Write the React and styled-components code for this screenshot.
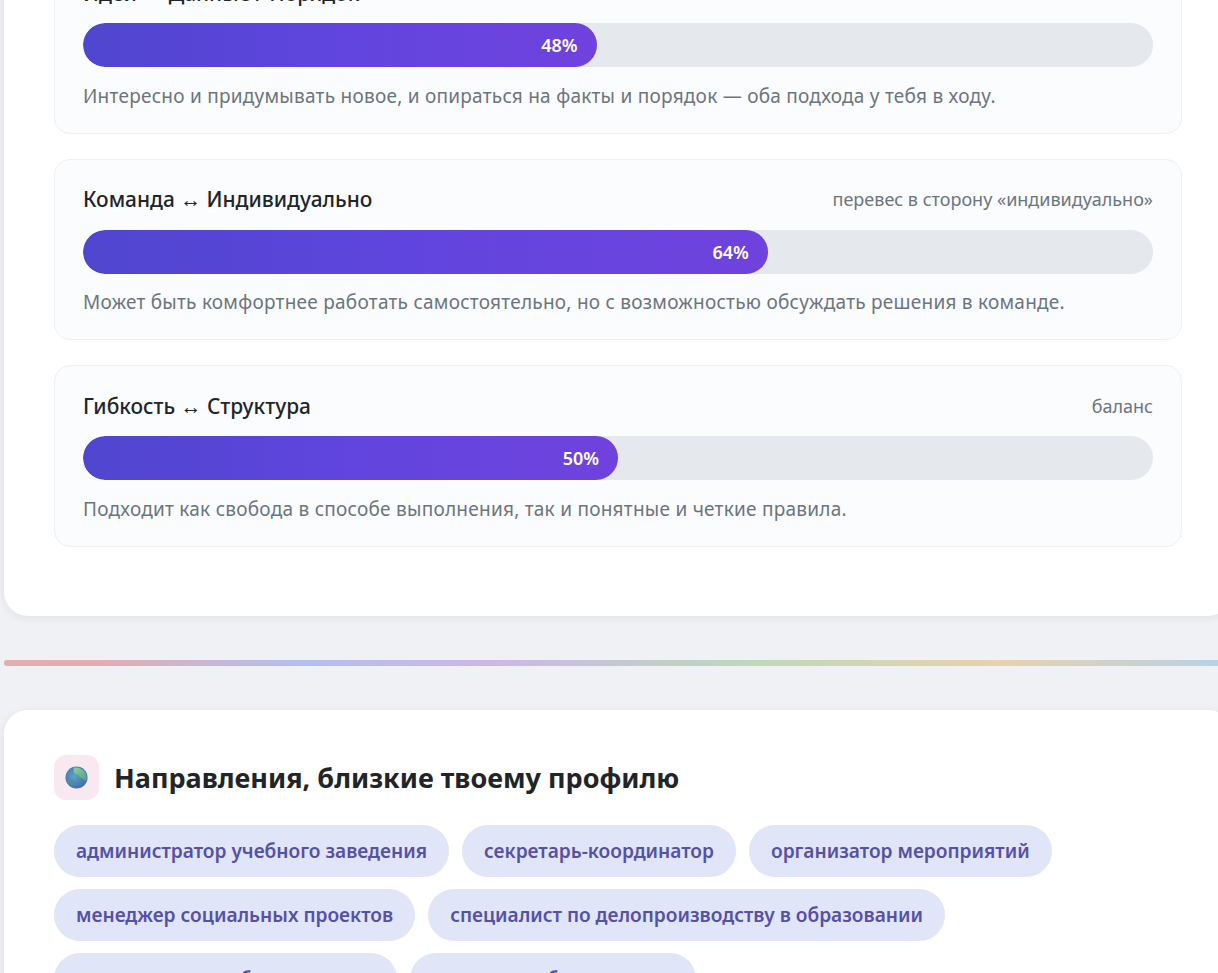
import React from "react";
import styled, { createGlobalStyle } from "styled-components";

const Global = createGlobalStyle`
  html, body { margin: 0; padding: 0; height: 973px; overflow: hidden; background: #f0f1f4; }
  * { box-sizing: border-box; }
  body { font-family: "Noto Sans", "Open Sans", "Liberation Sans", sans-serif; }
`;

const Page = styled.main`
  width: 1228px;
  margin: -97.75px 0 0 4px;
`;
const Card = styled.section`
  background: #fff;
  border-radius: 24px;
  box-shadow: 0 2px 10px rgba(30, 40, 60, 0.07);
  padding: 50px;
`;
const MetricList = styled.div`
  display: flex;
  flex-direction: column;
  gap: 25px;
  padding-bottom: 19.5px;
`;
const Metric = styled.article`
  background: #fbfcfe;
  border: 1px solid #eef0f3;
  border-radius: 16px;
  padding: 23px 28px 0;
  height: 181.5px;
`;
const MetricHead = styled.header`
  display: flex;
  justify-content: space-between;
  align-items: center;
  height: 33px;
  margin-bottom: 14px;
`;
const MetricTitle = styled.h3`
  margin: 0;
  font-size: 20.9px;
  font-weight: 500;
  color: #212529;
`;
const Lean = styled.span`
  font-size: 18px;
  color: #6c757d;
`;
const Track = styled.div`
  height: 44px;
  border-radius: 22px;
  background: #e5e8ec;
  overflow: hidden;
`;
const Fill = styled.div`
  height: 100%;
  border-radius: 22px;
  background: linear-gradient(90deg, #4f46cf 0%, #5f45dd 45%, #7042de 100%);
  color: #fff;
  font-size: 18px;
  font-weight: 600;
  display: flex;
  align-items: center;
  justify-content: flex-end;
  padding-right: 19px;
`;
const Note = styled.p`
  margin: 15.5px 0 0;
  font-size: 19px;
  letter-spacing: 0.25px;
  line-height: 27px;
  color: #6c757d;
  white-space: nowrap;
`;
const Rainbow = styled.div`
  height: 6px;
  margin: 44px 0;
  border-radius: 3px;
  background: linear-gradient(90deg, #e2aeae 0%, #e0aeb0 8%, #b4bff0 24%, #cdb7e8 40%, #bcd9bc 60%, #e8d2ac 81%, #b4d2e8 100%);
`;
const SectionHead = styled.header`
  display: flex;
  align-items: center;
  gap: 15px;
  margin: -5px 0 25px;
`;
const IconBox = styled.div`
  width: 45px;
  height: 45px;
  border-radius: 12px;
  background: #fae8f0;
  display: flex;
  align-items: center;
  justify-content: center;
`;
const SectionTitle = styled.h2`
  margin: 0;
  font-size: 27px;
  font-weight: 700;
  color: #212529;
`;
const Pills = styled.div`
  display: flex;
  flex-wrap: wrap;
  gap: 12px 13px;
  width: 1000px;
`;
const Pill = styled.span`
  height: 52px;
  border-radius: 26px;
  background: #e0e5f8;
  color: #5650a6;
  font-size: 19.1px;
  font-weight: 600;
  padding: 0 22px;
  display: flex;
  align-items: center;
  white-space: nowrap;
`;

const Globe = () => (
  <svg width="23" height="23" viewBox="0 0 24 24" aria-hidden="true">
    <defs>
      <radialGradient id="sea" cx="40%" cy="45%" r="75%">
        <stop offset="0%" stopColor="#5aa6c4" />
        <stop offset="100%" stopColor="#3b5ca8" />
      </radialGradient>
      <linearGradient id="land" x1="0" y1="0" x2="1" y2="1">
        <stop offset="0%" stopColor="#8fcf9c" />
        <stop offset="100%" stopColor="#4f9f88" />
      </linearGradient>
    </defs>
    <circle cx="12" cy="12" r="11.5" fill="url(#sea)" />
    <path d="M9 2c4-1.500 9 .5 12 4.500 2 3 2 7 1 9.500-1.500-1-3-2-4-3.500-2 0-3-1-4-3-2 0-4-1.500-5-3.500z" fill="url(#land)" />
    <path d="M3 13c2 0 4 1 5 3s0 4-1 5c-3-2-4.500-5-4-8z" fill="#4f8f96" />
  </svg>
);

const metrics = [
  { title: "Идеи ↔ Данные / Порядок", lean: "", value: 48, note: "Интересно и придумывать новое, и опираться на факты и порядок — оба подхода у тебя в ходу." },
  { title: "Команда ↔ Индивидуально", lean: "перевес в сторону «индивидуально»", value: 64, note: "Может быть комфортнее работать самостоятельно, но с возможностью обсуждать решения в команде." },
  { title: "Гибкость ↔ Структура", lean: "баланс", value: 50, note: "Подходит как свобода в способе выполнения, так и понятные и четкие правила." },
];
const directions = [
  "администратор учебного заведения",
  "секретарь-координатор",
  "организатор мероприятий",
  "менеджер социальных проектов",
  "специалист по делопроизводству в образовании",
  "координатор учебных центров",
  "куратор учебных групп и",
];

export default function App() {
  return (
    <>
      <Global />
      <Page>
        <Card>
          <MetricList>
            {metrics.map((m) => (
              <Metric key={m.title}>
                <MetricHead>
                  <MetricTitle>{m.title}</MetricTitle>
                  <Lean>{m.lean}</Lean>
                </MetricHead>
                <Track>
                  <Fill style={{ width: `${m.value}%` }}>{m.value}%</Fill>
                </Track>
                <Note>{m.note}</Note>
              </Metric>
            ))}
          </MetricList>
        </Card>
        <Rainbow />
        <Card>
          <SectionHead>
            <IconBox><Globe /></IconBox>
            <SectionTitle>Направления, близкие твоему профилю</SectionTitle>
          </SectionHead>
          <Pills>
            {directions.map((d) => <Pill key={d}>{d}</Pill>)}
          </Pills>
        </Card>
      </Page>
    </>
  );
}
